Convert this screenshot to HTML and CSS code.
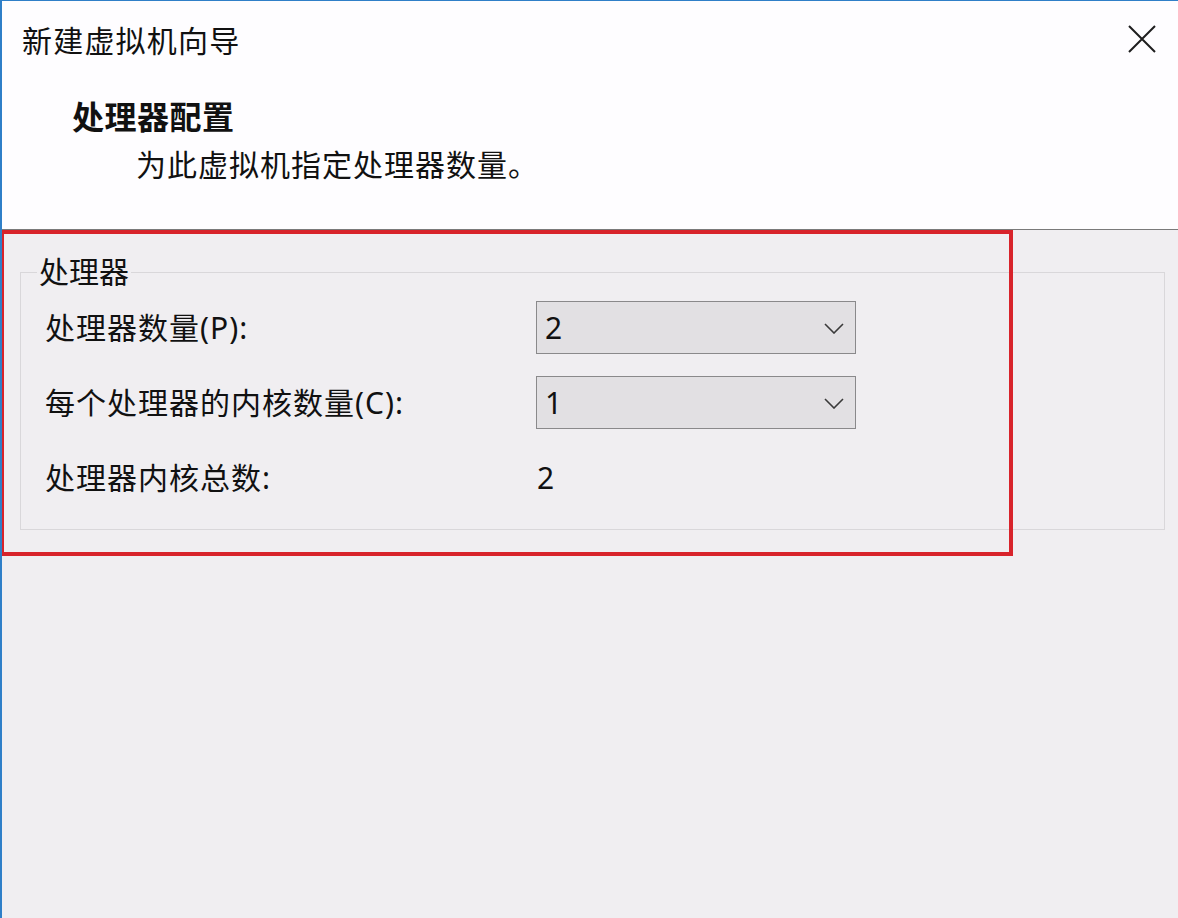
FILE: index.html
```html
<!DOCTYPE html>
<html lang="zh-CN">
<head>
<meta charset="utf-8">
<title>新建虚拟机向导</title>
<link rel="stylesheet" href="styles.css">
</head>
<body>
<div class="window">
  <header class="header">
    <div class="titlebar">
      <div class="title">新建虚拟机向导</div>
      <svg class="close" width="28" height="28" viewBox="0 0 28 28" aria-hidden="true">
        <path d="M1 1 L27 27 M27 1 L1 27" stroke="#1e1e1e" stroke-width="2" fill="none"/>
      </svg>
    </div>
    <h1 class="heading">处理器配置</h1>
    <p class="subtitle">为此虚拟机指定处理器数量。</p>
  </header>
  <main class="content">
    <fieldset class="group">
      <legend class="legend">处理器</legend>
      <div class="grid">
        <div class="label">处理器数量(P):</div>
        <div class="combo"><span class="combo-value">2</span>
          <svg class="chev" width="20" height="11" viewBox="0 0 20 11" aria-hidden="true"><path d="M1 1 L10 10 L19 1" stroke="#3a3a3a" stroke-width="1.6" fill="none"/></svg>
        </div>
        <div class="label">每个处理器的内核数量(C):</div>
        <div class="combo"><span class="combo-value">1</span>
          <svg class="chev" width="20" height="11" viewBox="0 0 20 11" aria-hidden="true"><path d="M1 1 L10 10 L19 1" stroke="#3a3a3a" stroke-width="1.6" fill="none"/></svg>
        </div>
        <div class="label">处理器内核总数:</div>
        <div class="total">2</div>
      </div>
    </fieldset>
  </main>
  <div class="highlight"></div>
</div>
</body>
</html>
```
FILE: styles.css
```css
* { box-sizing: border-box; }
html, body {
  margin: 0;
  padding: 0;
  background: #f0eef1;
}
body {
  font-family: "Noto Sans", "Noto Sans CJK SC", sans-serif;
  color: #111;
}
.window {
  position: relative;
  width: 1178px;
  height: 918px;
  border-left: 2px solid #2f7fc8;
  border-top: 1px solid #2f7fc8;
  background: #f0eef1;
  overflow: hidden;
  display: flex;
  flex-direction: column;
}
.header {
  height: 229px;
  background: #fefdff;
  border-bottom: 1px solid #7a7a7a;
  padding-top: 22px;
}
.titlebar {
  display: flex;
  justify-content: space-between;
  align-items: flex-start;
  padding-left: 20px;
  padding-right: 22px;
}
.title {
  font-size: 30px;
  line-height: 36px;
  letter-spacing: 1.2px;
}
.close {
  margin-top: 2px;
}
.heading {
  margin: 39px 0 0 70px;
  font-size: 32px;
  line-height: 38px;
  font-weight: 700;
  letter-spacing: 0.5px;
}
.subtitle {
  margin: 11px 0 0 134px;
  font-size: 30px;
  line-height: 36px;
  letter-spacing: 1px;
}
.content {
  flex: 1;
  padding: 24px 13px 0 18px;
}
.group {
  margin: 0;
  padding: 0;
  border: 1px solid #d9d7da;
  min-width: 0;
}
.legend {
  margin-left: 16px;
  padding: 0 2px;
  font-size: 30px;
  line-height: 36px;
}
.grid {
  display: grid;
  grid-template-columns: 491px 320px;
  grid-auto-rows: 53px;
  row-gap: 22px;
  align-items: center;
  padding: 11px 0 25px 24px;
}
.label {
  font-size: 30px;
  line-height: 36px;
  letter-spacing: 1px;
  white-space: nowrap;
}
.combo {
  height: 53px;
  border: 1px solid #8a898b;
  background: #e2e0e3;
  display: flex;
  align-items: center;
  justify-content: space-between;
  padding: 0 11px 0 8px;
}
.combo-value {
  font-size: 30px;
  line-height: 36px;
}
.chev {
  margin-top: 2px;
}
.total {
  font-size: 30px;
  line-height: 36px;
  padding-left: 1px;
}
.highlight {
  position: absolute;
  left: -2px;
  top: 229px;
  width: 1013px;
  height: 326px;
  border: 4px solid #d8232b;
  pointer-events: none;
}
```
